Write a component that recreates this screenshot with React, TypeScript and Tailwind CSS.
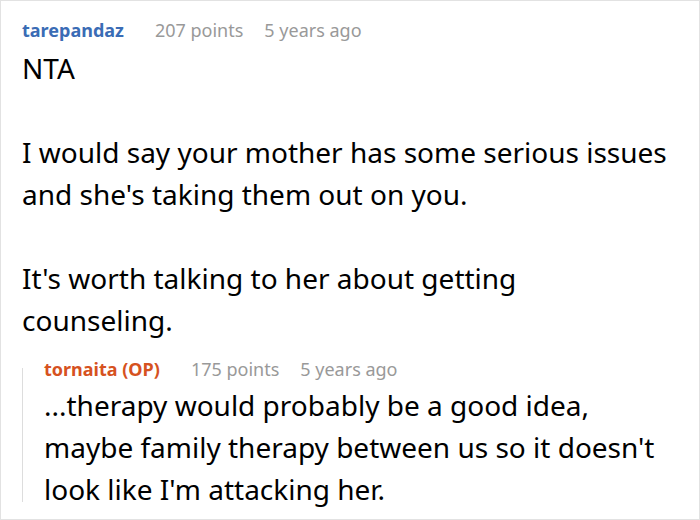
const font = { fontFamily: '"Noto Sans", "Open Sans", sans-serif' };

function Meta({ name, color, points, age }: { name: string; color: string; points: string; age: string }) {
  return (
    <div className="flex items-baseline text-[18px] leading-[24px]">
      <span className={`font-bold ${color}`}>{name}</span>
      <span className="ml-[31px] text-[#999999]">{points}</span>
      <span className="ml-[21px] text-[#999999]">{age}</span>
    </div>
  );
}

export default function App() {
  return (
    <div style={font} className="w-[700px] h-[520px] border border-[#e2e2e2] bg-white pl-[21px] pr-[30px] pt-[17px] text-black overflow-hidden">
      <Meta name="tarepandaz" color="text-[#3a6cb5]" points="207 points" age="5 years ago" />
      <div className="text-[28px] leading-[42px] mt-[5px]">
        <p>NTA</p>
        <p className="mt-[42px]">I would say your mother has some serious issues and she's taking them out on you.</p>
        <p className="mt-[42px]">It's worth talking to her about getting counseling.</p>
      </div>
      <div className="mt-[16px] flex">
        <div className="w-px shrink-0 bg-[#dddddd] mt-[11px] mb-[8px]" />
        <div className="ml-[21px] min-w-0 flex-1">
          <Meta name="tornaita (OP)" color="text-[#d6521f]" points="175 points" age="5 years ago" />
          <p className="text-[28px] leading-[42px] mt-[3px]">
            ...therapy would probably be a good idea, maybe family therapy between us so it doesn't look like I'm attacking her.
          </p>
        </div>
      </div>
    </div>
  );
}
